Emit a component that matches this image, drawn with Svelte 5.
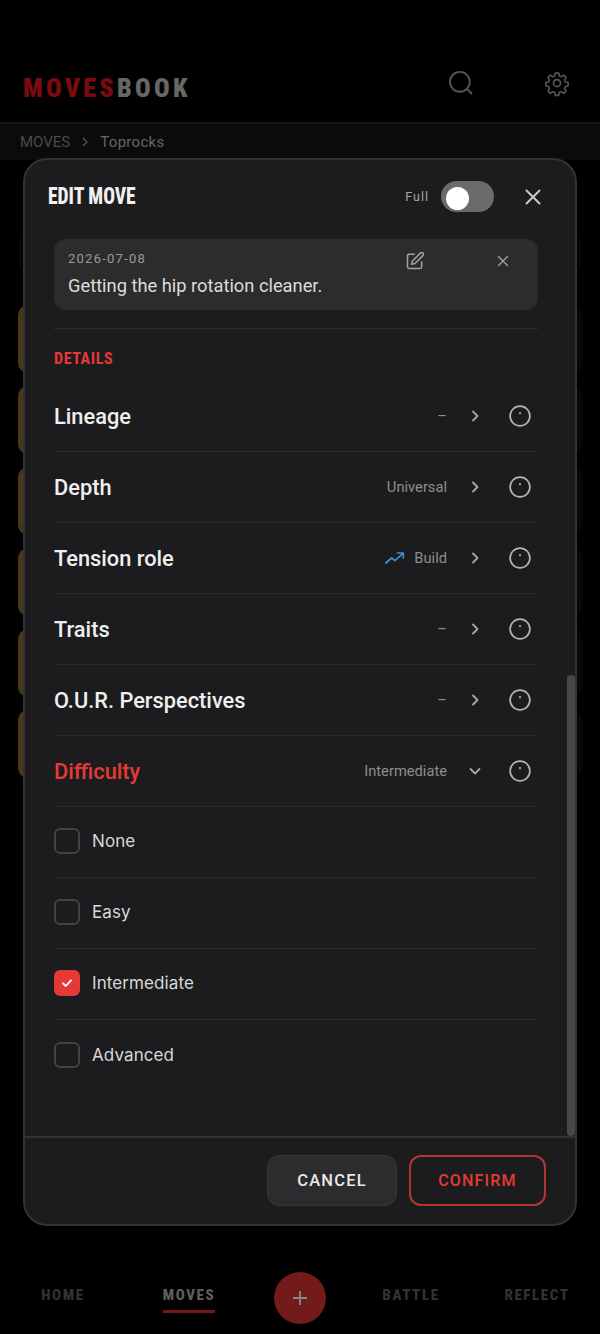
<script>
  const rows = [
    { label: 'Lineage', value: '–' },
    { label: 'Depth', value: 'Universal' },
    { label: 'Tension role', value: 'Build', trend: true },
    { label: 'Traits', value: '–' },
    { label: 'O.U.R. Perspectives', value: '–' },
    { label: 'Difficulty', value: 'Intermediate', open: true }
  ]
  const options = ['None', 'Easy', 'Intermediate', 'Advanced']
  let selected = $state('Intermediate')
  let full = $state(false)
  const cards = [305, 386, 467, 548, 629, 710]
</script>

<div class="page">
  <header class="top">
    <div class="logo"><span class="red">MOVES</span><span>BOOK</span></div>
    <div class="top-icons">
      <svg width="28" height="28" viewBox="0 0 24 24" fill="none" stroke="#555" stroke-width="1.6" stroke-linecap="round"><circle cx="11" cy="11" r="8.5"/><path d="M17.5 17.5 21 21"/></svg>
      <svg width="28" height="28" viewBox="0 0 24 24" fill="none" stroke="#555" stroke-width="1.5" stroke-linecap="round" stroke-linejoin="round"><path d="M10.3 2.6h3.4l.5 2.7 1.8.8 2.3-1.6 2.4 2.4-1.6 2.3.8 1.8 2.7.5v3.4l-2.7.5-.8 1.8 1.6 2.3-2.4 2.4-2.3-1.6-1.8.8-.5 2.7h-3.4l-.5-2.7-1.8-.8-2.3 1.6-2.4-2.4 1.6-2.3-.8-1.8-2.7-.5v-3.4l2.7-.5.8-1.8-1.6-2.3 2.4-2.4 2.3 1.6 1.8-.8z" transform="translate(1.2 1.2) scale(.9)"/><circle cx="12" cy="12" r="3"/></svg>
    </div>
  </header>
  <div class="crumbs">
    <span>MOVES</span>
    <svg width="12" height="12" viewBox="0 0 12 12" fill="none" stroke="#555" stroke-width="1.4"><path d="m4 2 4 4-4 4"/></svg>
    <span class="here">Toprocks</span>
  </div>
  <div class="search"></div>
  <div class="cards">
    {#each cards as c}<div class="card"></div>{/each}
  </div>

  <nav class="tabs">
    <span>HOME</span>
    <span class="on">MOVES</span>
    <span class="fab"><svg width="18" height="18" viewBox="0 0 18 18" stroke="#8a8a8a" stroke-width="1.8"><path d="M9 2v14M2 9h14"/></svg></span>
    <span>BATTLE</span>
    <span>REFLECT</span>
  </nav>

  <section class="modal">
    <div class="head">
      <h2>EDIT MOVE</h2>
      <span class="full">Full</span>
      <button class="switch" class:on={full} onclick={() => (full = !full)} aria-label="Full"><i></i></button>
      <button class="close" aria-label="Close">
        <svg width="20" height="20" viewBox="0 0 20 20" stroke="#c8c8c8" stroke-width="2" stroke-linecap="round"><path d="m3.5 3.5 13 13M16.500 3.500l-13 13"/></svg>
      </button>
    </div>

    <div class="body">
      <div class="note">
        <div class="note-top">
          <span class="date">2026-07-08</span>
          <svg class="pen" width="20" height="20" viewBox="0 0 24 24" fill="none" stroke="#a0a0a0" stroke-width="1.9" stroke-linecap="round" stroke-linejoin="round"><path d="M11 4H5a2 2 0 0 0-2 2v13a2 2 0 0 0 2 2h13a2 2 0 0 0 2-2v-6"/><path d="M18.400 2.600a2 2 0 0 1 3 3L12 15l-4 1 1-4z"/></svg>
          <svg class="x" width="12" height="12" viewBox="0 0 12 12" stroke="#a0a0a0" stroke-width="1.4" stroke-linecap="round"><path d="m1.500 1.500 9 9M10.500 1.500l-9 9"/></svg>
        </div>
        <p>Getting the hip rotation cleaner.</p>
      </div>

      <h3>DETAILS</h3>

      {#each rows as row}
        <div class="row" class:open={row.open}>
          <span class="label">{row.label}</span>
          {#if row.trend}
            <svg class="trend" width="20" height="20" viewBox="0 0 24 24" fill="none" stroke="#3f8fdc" stroke-width="2" stroke-linecap="round" stroke-linejoin="round"><path d="m1 18 7-6 4 3 9-8"/><path d="M15 6h7v6"/></svg>
          {/if}
          <span class="value">{row.value}</span>
          <svg class="chev" width="14" height="14" viewBox="0 0 14 14" fill="none" stroke="#a8a8a8" stroke-width="1.800" stroke-linecap="round" stroke-linejoin="round">
            {#if row.open}<path d="m2.500 5 4.500 4.500L11.500 5"/>{:else}<path d="m5 2.500 4.500 4.500L5 11.500"/>{/if}
          </svg>
          <svg class="info" width="22" height="22" viewBox="0 0 22 22" fill="none" stroke="#b4b4b4"><circle cx="11" cy="11" r="9.900" stroke-width="1.700"/><path d="M11 7v2.200" stroke-width="1.600"/></svg>
        </div>
      {/each}

      {#each options as opt}
        <button class="opt" onclick={() => (selected = opt)}>
          <span class="box" class:checked={selected === opt}>
            {#if selected === opt}
              <svg width="12" height="12" viewBox="0 0 12 12" fill="none" stroke="#fff" stroke-width="1.800" stroke-linecap="round" stroke-linejoin="round"><path d="m2 6.300 2.800 2.700L10 3.300"/></svg>
            {/if}
          </span>
          {opt}
        </button>
      {/each}
    </div>

    <div class="scroll"></div>

    <div class="foot">
      <button class="cancel">CANCEL</button>
      <button class="confirm">CONFIRM</button>
    </div>
  </section>
</div>

<style>
  :global(body) {
    margin: 0;
    background: #000;
  }

  .page {
    position: relative;
    width: 600px;
    height: 1334px;
    overflow: hidden;
    background: #000;
    font-family: Roboto, "Noto Sans", sans-serif;
    color: #e8e8e8;
  }

  .top {
    height: 124px;
    box-sizing: border-box;
    display: flex;
    align-items: center;
    justify-content: space-between;
    padding: 49px 29px 0 23px;
    border-bottom: 2px solid #161616;
  }

  .logo {
    font-family: Roboto, sans-serif;
    font-stretch: 75%;
    font-weight: 900;
    font-size: 26px;
    letter-spacing: 3.300px;
    color: #666;
    display: flex;
    margin-top: 4px;
  }

  .red {
    color: #7a0c0f;
  }

  .top-icons {
    display: flex;
    gap: 68px;
    margin-top: -6px;
  }

  .crumbs {
    height: 36px;
    background: #0b0b0b;
    display: flex;
    align-items: center;
    gap: 9px;
    padding-left: 20px;
    font-stretch: 90%;
    font-size: 15px;
    color: #4a4a4a;
  }

  .here {
    color: #666;
    letter-spacing: 0.3px;
  }

  .search {
    position: absolute;
    left: 20px;
    right: 20px;
    top: 231px;
    height: 42px;
    border: 1px solid #101010;
    border-radius: 10px;
  }

  .cards {
    position: absolute;
    left: 18px;
    top: 305px;
    display: flex;
    flex-direction: column;
    gap: 13px;
  }

  .card {
    width: 564px;
    height: 68px;
    box-sizing: border-box;
    border-radius: 10px;
    background: #080808;
    border-left: 6px solid #4a3714;
  }

  .tabs {
    position: absolute;
    left: 0;
    right: 0;
    top: 1272px;
    display: grid;
    grid-template-columns: 126px 126px 96px 126px 126px;
    justify-items: center;
    font-family: Roboto, sans-serif;
    font-stretch: 75%;
    font-weight: 800;
    font-size: 15px;
    letter-spacing: 1.600px;
    color: #333;
  }

  .tabs > span {
    height: 29px;
    margin-top: 14px;
  }

  .tabs > span.on {
    height: 24px;
    color: #5f5f5f;
    border-bottom: 3px solid #7a1518;
  }

  .tabs > span.fab {
    width: 52px;
    height: 52px;
    margin-top: 0;
    border-radius: 50%;
    background: #731a1a;
    display: flex;
    align-items: center;
    justify-content: center;
    padding-top: 0;
  }

  .modal {
    position: absolute;
    left: 23px;
    top: 158px;
    width: 554px;
    height: 1068px;
    box-sizing: border-box;
    background: #1c1c1e;
    border: 2px solid #333335;
    border-radius: 24px;
    display: flex;
    flex-direction: column;
    overflow: hidden;
  }

  .head {
    height: 79px;
    flex: none;
    display: flex;
    align-items: center;
    padding: 0 32px 6px 23px;
    box-sizing: border-box;
  }

  h2 {
    margin: 0 auto 0 0;
    font-family: Roboto, sans-serif;
    font-stretch: 75%;
    font-weight: 800;
    font-size: 23px;
    letter-spacing: 0;
    color: #f0f0f0;
    transform: scaleX(.85);
    transform-origin: left center;
  }

  .full {
    font-size: 12.500px;
    font-weight: 400;
    letter-spacing: 1px;
    color: #a8a8a8;
    margin-right: 12px;
  }

  .switch {
    width: 53px;
    height: 31px;
    padding: 4px 0 0 5px;
    border: 0;
    border-radius: 16px;
    background: #6b6b6b;
    margin-right: 29px;
    box-sizing: border-box;
    display: block;
  }

  .switch i {
    display: block;
    width: 23px;
    height: 23px;
    border-radius: 50%;
    background: #fff;
  }

  .switch.on {
    padding-left: 26px;
    background: #e53935;
  }

  .close {
    padding: 0;
    border: 0;
    background: none;
    height: 20px;
  }

  .body {
    flex: 1;
    min-height: 0;
    padding: 0 37px 0 29px;
  }

  .note {
    height: 71px;
    box-sizing: border-box;
    background: #2c2c2e;
    border-radius: 12px;
    padding: 11px 14px;
    margin-bottom: 18px;
    position: relative;
  }

  .note::after {
    content: "";
    position: absolute;
    left: 0;
    right: 0;
    bottom: -19px;
    height: 1px;
    background: #2c2c2e;
  }

  .note-top {
    display: flex;
    align-items: center;
    height: 16px;
  }

  .date {
    font-size: 13px;
    letter-spacing: 1.250px;
    color: #9a9a9a;
    margin-right: auto;
  }

  .pen {
    position: relative;
    top: 3px;
    margin-right: 72px;
  }

  .x {
    margin-right: 15px;
    position: relative;
    top: 3px;
  }

  p {
    margin: 9px 0 0;
    font-size: 18.300px;
    color: #dcdcdc;
  }

  h3 {
    margin: 0 0 12px;
    padding-top: 21px;
    height: 20px;
    line-height: 20px;
    font-family: Roboto, sans-serif;
    font-stretch: 87%;
    font-weight: 700;
    font-size: 16px;
    letter-spacing: 0.6px;
    color: #e53935;
  }

  .row {
    height: 71px;
    box-sizing: border-box;
    display: flex;
    align-items: center;
    border-bottom: 1px solid #2a2a2c;
  }

  .label {
    margin-right: auto;
    font-size: 21.800px;
    font-weight: 500;
    color: #efefef;
  }

  .open .label {
    color: #e53935;
  }

  .trend {
    margin-right: 9px;
  }

  .value {
    font-size: 14.700px;
    color: #8e8e8e;
  }

  .chev {
    margin: 0 0 0 21px;
  }

  .info {
    margin: 0 7px 0 27px;
  }

  .opt {
    display: flex;
    align-items: center;
    width: 100%;
    height: 71px;
    padding: 0 0 2px;
    gap: 12px;
    background: none;
    border: 0;
    border-bottom: 1px solid #2a2a2c;
    box-sizing: border-box;
    font-family: Inter, Roboto, sans-serif;
    font-size: 17px;
    letter-spacing: 0.1px;
    color: #d8d8d8;
  }

  .opt:last-of-type {
    border-bottom: 0;
  }

  .box {
    width: 26px;
    height: 26px;
    box-sizing: border-box;
    border: 2px solid #424244;
    border-radius: 6px;
    display: flex;
    align-items: center;
    justify-content: center;
  }

  .box.checked {
    background: #e53935;
    border-color: #e53935;
  }

  .scroll {
    position: absolute;
    right: 0;
    top: 515px;
    bottom: 88px;
    width: 8px;
    border-radius: 4px;
    background: #474747;
  }

  .foot {
    flex: none;
    height: 88px;
    box-sizing: border-box;
    border-top: 2px solid #333335;
    display: flex;
    justify-content: flex-end;
    align-items: flex-start;
    gap: 12px;
    padding: 17px 29px 0 0;
  }

  .foot button {
    height: 51px;
    box-sizing: border-box;
    border-radius: 12px;
    font-family: Roboto, sans-serif;
    font-weight: 500;
    font-size: 16.500px;
    letter-spacing: 1.200px;
  }

  .cancel {
    width: 130px;
    background: #2c2c2e;
    border: 1px solid #363638;
    color: #e8e8e8;
  }

  .foot .confirm {
    width: 137px;
    background: none;
    border: 2px solid #b23533;
    color: #e53935;
    font-size: 16px;
  }
</style>
